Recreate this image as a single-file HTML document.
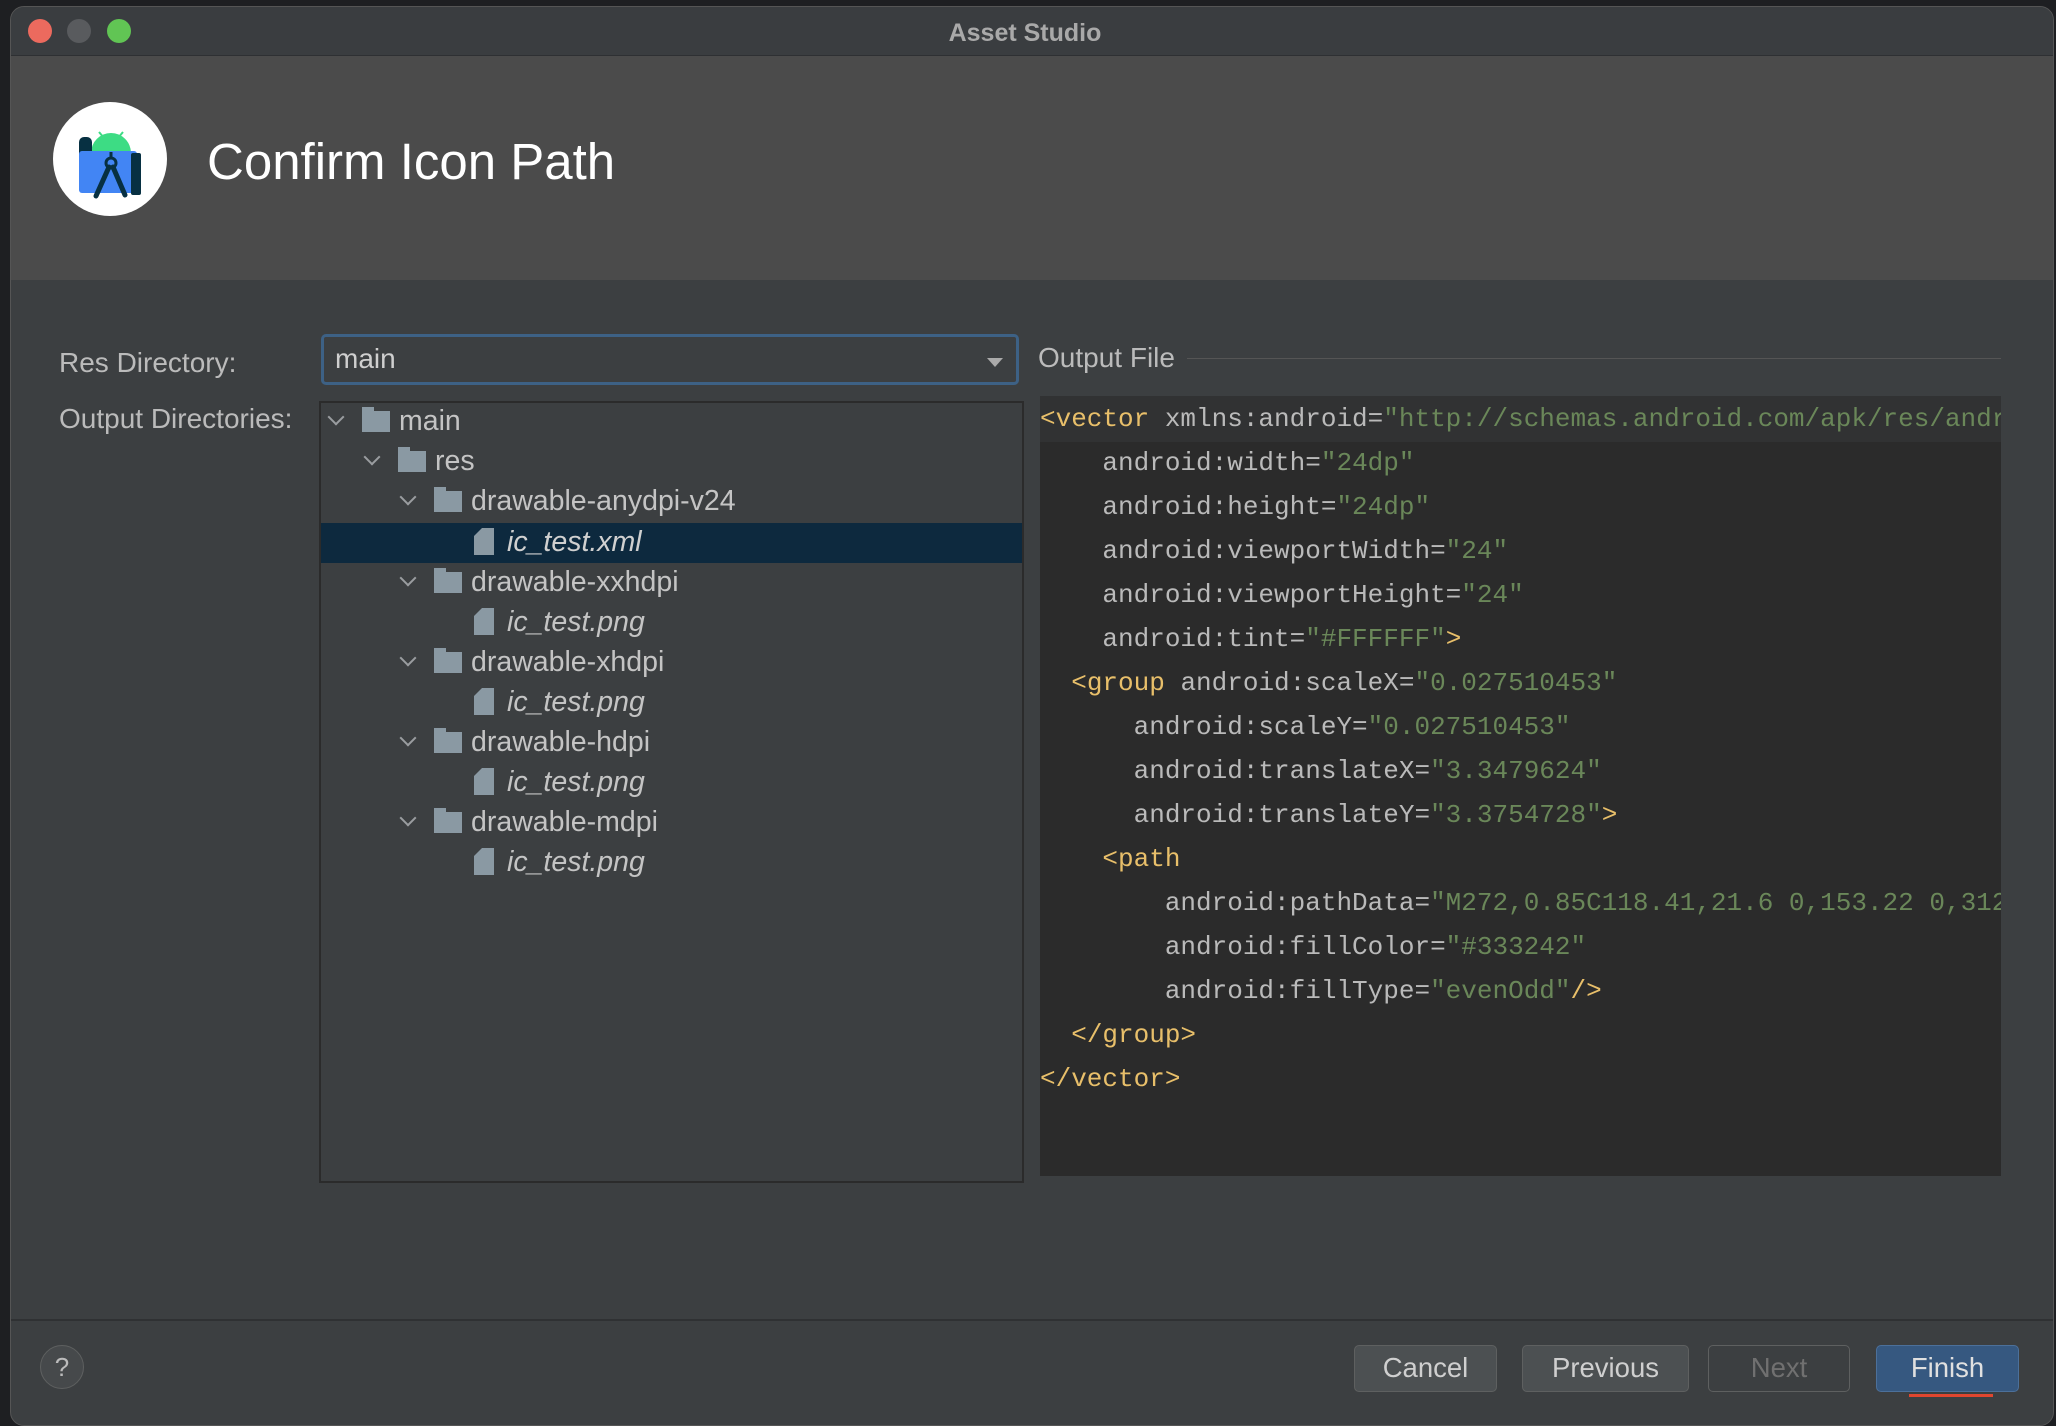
<!DOCTYPE html>
<html><head><meta charset="utf-8"><style>
*{margin:0;padding:0;box-sizing:border-box}
body{width:2056px;height:1412px;background:#1e1f22;position:relative;overflow:hidden;font-family:"Liberation Sans",sans-serif;color:#bbbbbb}
.a{position:absolute}
.win{left:10px;top:6px;width:2044px;height:1420px;background:#3c3f41;border-radius:14px;overflow:hidden;border:1px solid #555}
.row{position:absolute;height:40px;line-height:40px;font-size:28.5px;color:#c4c4c4;white-space:nowrap}
.chev{position:absolute;width:12px;height:12px;border-right:2.5px solid #9a9da0;border-bottom:2.5px solid #9a9da0;transform:rotate(45deg)}
.fold{position:absolute;width:28px;height:21px;background:#8a99a3}
.fold:before{content:"";position:absolute;left:0;top:-4px;width:12px;height:5px;background:#8a99a3}
.file{position:absolute;width:20px;height:27px;background:#8a99a3;clip-path:polygon(8px 0,100% 0,100% 100%,0 100%,0 8px)}
.code{font-family:"Liberation Mono",monospace;font-size:26px;position:absolute;white-space:pre;color:#bababa;line-height:44px}
.t{color:#e8bf6a}.v{color:#6a8759}
.btn{position:absolute;top:1345px;height:47px;border-radius:5px;border:1.5px solid #5e6060;background:#4c5052;color:#cfcfcf;font-size:27.5px;text-align:center;line-height:44px}
</style></head><body>
<div class="a win">
 <div class="a" style="left:0;top:0;width:2044px;height:49px;background:#3a3d40;border-bottom:1px solid #2e3033"></div>
 <div class="a" style="left:17px;top:12px;width:24px;height:24px;border-radius:50%;background:#ec6a5e"></div>
 <div class="a" style="left:56px;top:12px;width:24px;height:24px;border-radius:50%;background:#595b5e"></div>
 <div class="a" style="left:96px;top:12px;width:24px;height:24px;border-radius:50%;background:#61c554"></div>
 <div class="a" style="left:-8px;top:12px;width:2044px;text-align:center;font-size:25px;font-weight:bold;color:#a9a9a9">Asset Studio</div>
 <div class="a" style="left:0;top:49px;width:2044px;height:224px;background:#4b4b4b"></div>
 <svg class="a" style="left:42px;top:94px" width="116" height="116" viewBox="0 0 116 116">
  <circle cx="57" cy="58" r="57" fill="#fff"/>
  <circle cx="58" cy="52" r="20" fill="#3ddc84"/>
  <line x1="46" y1="31" x2="51" y2="37" stroke="#3ddc84" stroke-width="2"/><line x1="70" y1="31" x2="65" y2="37" stroke="#3ddc84" stroke-width="2"/>
  <rect x="26" y="36" width="13" height="24" rx="5" fill="#073042"/>
  <rect x="26" y="50" width="58" height="42" rx="3" fill="#4285f4"/>
  <rect x="78" y="52" width="10" height="42" rx="2" fill="#073042"/>
  <circle cx="58" cy="62" r="5" fill="none" stroke="#073042" stroke-width="3"/>
  <line x1="56" y1="66" x2="43" y2="95" stroke="#073042" stroke-width="5" stroke-linecap="round"/>
  <line x1="60" y1="66" x2="72" y2="94" stroke="#073042" stroke-width="5" stroke-linecap="round"/>
  <line x1="58" y1="51" x2="58" y2="57" stroke="#073042" stroke-width="3"/>
 </svg>
 <div class="a" style="left:196px;top:125px;font-size:51px;color:#fff">Confirm Icon Path</div>

 <div class="a" style="left:48px;top:340px;font-size:28px;color:#bbb">Res Directory:</div>
 <div class="a" style="left:48px;top:396px;font-size:28px;color:#bbb">Output Directories:</div>
 <div class="a" style="left:310px;top:327px;width:698px;height:51px;border:3px solid #3d6185;border-radius:5px;background:#3c3f41"></div>
 <div class="a" style="left:324px;top:336px;font-size:28px;color:#cfcfcf">main</div>
 <div class="a" style="left:976px;top:351px;width:0;height:0;border-left:8px solid transparent;border-right:8px solid transparent;border-top:9px solid #aaa"></div>

 <div class="a" style="left:308px;top:394px;width:705px;height:782px;border:2px solid #2b2b2b;background:#3c3f41"></div>
 <div class="a" style="left:310px;top:516px;width:701px;height:40px;background:#0d293e"></div>
</div>
<!-- tree (page coords) -->
<div class="chev" style="left:330px;top:411px"></div><div class="fold" style="left:362px;top:411px"></div><div class="row" style="left:399px;top:401px">main</div>
<div class="chev" style="left:366px;top:451px"></div><div class="fold" style="left:398px;top:451px"></div><div class="row" style="left:435px;top:441px">res</div>
<div class="chev" style="left:402px;top:491px"></div><div class="fold" style="left:434px;top:491px"></div><div class="row" style="left:471px;top:481px">drawable-anydpi-v24</div>
<div class="file" style="left:474px;top:528px"></div><div class="row" style="left:507px;top:522px;font-style:italic;color:#d0d0d0">ic_test.xml</div>
<div class="chev" style="left:402px;top:572px"></div><div class="fold" style="left:434px;top:572px"></div><div class="row" style="left:471px;top:562px">drawable-xxhdpi</div>
<div class="file" style="left:474px;top:608px"></div><div class="row" style="left:507px;top:602px;font-style:italic">ic_test.png</div>
<div class="chev" style="left:402px;top:652px"></div><div class="fold" style="left:434px;top:652px"></div><div class="row" style="left:471px;top:642px">drawable-xhdpi</div>
<div class="file" style="left:474px;top:688px"></div><div class="row" style="left:507px;top:682px;font-style:italic">ic_test.png</div>
<div class="chev" style="left:402px;top:732px"></div><div class="fold" style="left:434px;top:732px"></div><div class="row" style="left:471px;top:722px">drawable-hdpi</div>
<div class="file" style="left:474px;top:768px"></div><div class="row" style="left:507px;top:762px;font-style:italic">ic_test.png</div>
<div class="chev" style="left:402px;top:812px"></div><div class="fold" style="left:434px;top:812px"></div><div class="row" style="left:471px;top:802px">drawable-mdpi</div>
<div class="file" style="left:474px;top:848px"></div><div class="row" style="left:507px;top:842px;font-style:italic">ic_test.png</div>

<div class="a" style="left:1038px;top:342px;font-size:28px;color:#bbb">Output File</div>
<div class="a" style="left:1187px;top:358px;width:814px;height:1px;background:#555"></div>
<div class="a" style="left:1040px;top:396px;width:961px;height:780px;background:#2b2b2b;overflow:hidden">
 <div class="a" style="left:0;top:0;width:961px;height:46px;background:#313233"></div>
 <div class="code" style="left:0;top:1px"><span class="t">&lt;vector</span> xmlns:android=<span class="v">"http://schemas.android.com/apk/res/android"</span>
    android:width=<span class="v">"24dp"</span>
    android:height=<span class="v">"24dp"</span>
    android:viewportWidth=<span class="v">"24"</span>
    android:viewportHeight=<span class="v">"24"</span>
    android:tint=<span class="v">"#FFFFFF"</span><span class="t">&gt;</span>
  <span class="t">&lt;group</span> android:scaleX=<span class="v">"0.027510453"</span>
      android:scaleY=<span class="v">"0.027510453"</span>
      android:translateX=<span class="v">"3.3479624"</span>
      android:translateY=<span class="v">"3.3754728"</span><span class="t">&gt;</span>
    <span class="t">&lt;path</span>
        android:pathData=<span class="v">"M272,0.85C118.41,21.6 0,153.22 0,312"</span>
        android:fillColor=<span class="v">"#333242"</span>
        android:fillType=<span class="v">"evenOdd"</span><span class="t">/&gt;</span>
  <span class="t">&lt;/group&gt;</span>
<span class="t">&lt;/vector&gt;</span></div>
</div>

<div class="a" style="left:11px;top:1319px;width:2042px;height:2px;background:#2f3133"></div>
<div class="a" style="left:40px;top:1345px;width:44px;height:44px;border-radius:50%;border:1.5px solid #5e6060;background:#46494b;text-align:center;line-height:42px;font-size:26px;color:#bbb">?</div>
<div class="btn" style="left:1354px;width:143px">Cancel</div>
<div class="btn" style="left:1522px;width:167px">Previous</div>
<div class="btn" style="left:1708px;width:142px;background:#3c3f41;color:#707070">Next</div>
<div class="btn" style="left:1876px;width:143px;background:#365880;border-color:#4c709a;color:#e0e0e0">Finish</div>
<div class="a" style="left:1909px;top:1394px;width:84px;height:3px;background:#e0462f"></div>
</body></html>
